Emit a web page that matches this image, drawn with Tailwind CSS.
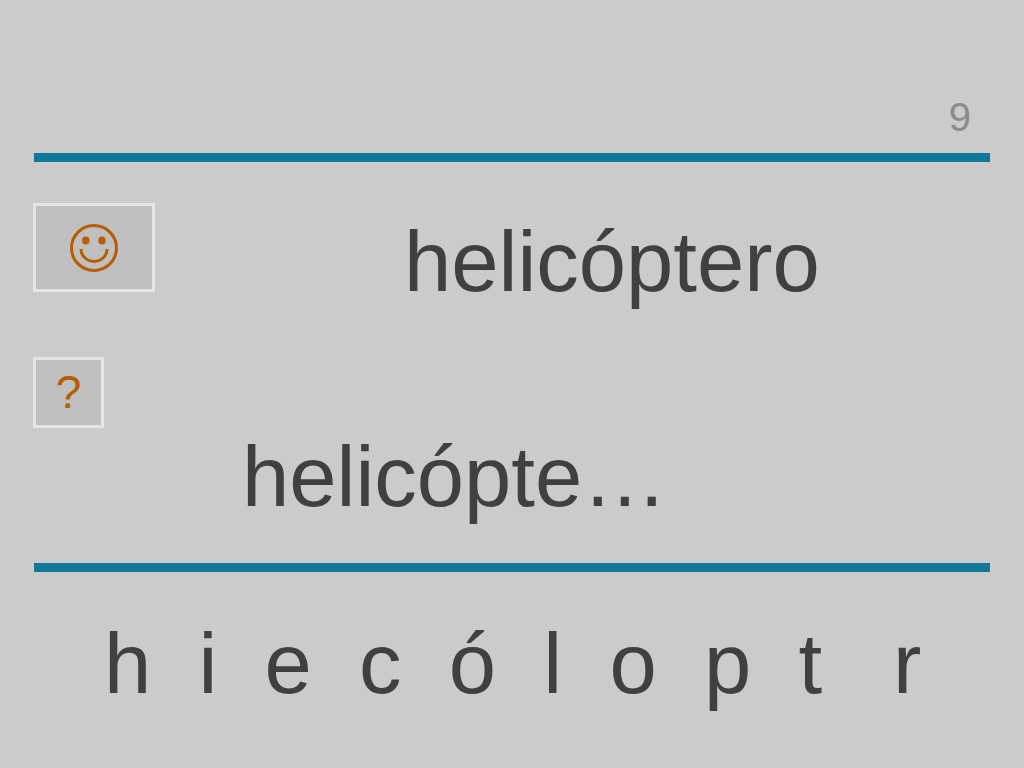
<!DOCTYPE html>
<html lang="es">
<head>
<meta charset="utf-8">
<title>helicóptero</title>
<script src="https://cdn.jsdelivr.net/npm/@tailwindcss/browser@4"></script>
</head>
<body class="min-h-screen bg-[#cbcbcb] text-[#404040] font-['Liberation_Sans',Arial,sans-serif]">
<main class="px-[33px] pb-6">
  <header class="flex justify-end pt-[93px] pr-5 pb-3 text-[40px] leading-[48px] text-[#8c8c8c]"><span>9</span></header>
  <hr class="mx-px h-[9px] border-0 bg-[#10789b]">
  <section class="flex items-start pt-[41px]">
    <button type="button" aria-label="Correcto" class="flex h-[89px] w-[122px] shrink-0 items-center justify-center border-3 border-[#e5e5e5] bg-[#bfbfbf] text-[#b85c00]">
      <svg class="size-12" viewBox="0 0 48 48" fill="none" stroke="currentColor" stroke-width="3"><circle cx="24" cy="24" r="22.5"/><ellipse cx="15.8" cy="16.5" rx="3.7" ry="4" fill="currentColor" stroke="none"/><ellipse cx="32" cy="16.5" rx="3.7" ry="4" fill="currentColor" stroke="none"/><path d="M11 25a13 12.4 0 0 0 26 0"/></svg>
    </button>
    <p class="grow pt-[11px] pl-[249px] text-[85px] leading-[96px]">helicóptero</p>
  </section>
  <section class="flex items-start pt-[47px] pb-[38px]">
    <button type="button" aria-label="Ayuda" class="flex size-[71px] shrink-0 items-center justify-center border-3 border-[#e5e5e5] bg-[#bfbfbf] pb-px text-[46px] leading-[64px] text-[#b85c00]">?</button>
    <p class="grow pt-[72px] pl-[138px] text-[85px] leading-[96px]">helicópte…</p>
  </section>
  <hr class="mx-px h-[9px] border-0 bg-[#10789b]">
  <p class="pt-11 pl-[71px] text-[85px] leading-[96px] whitespace-pre">h  i  e  c  ó  l  o  p  t   r</p>
</main>
</body>
</html>
